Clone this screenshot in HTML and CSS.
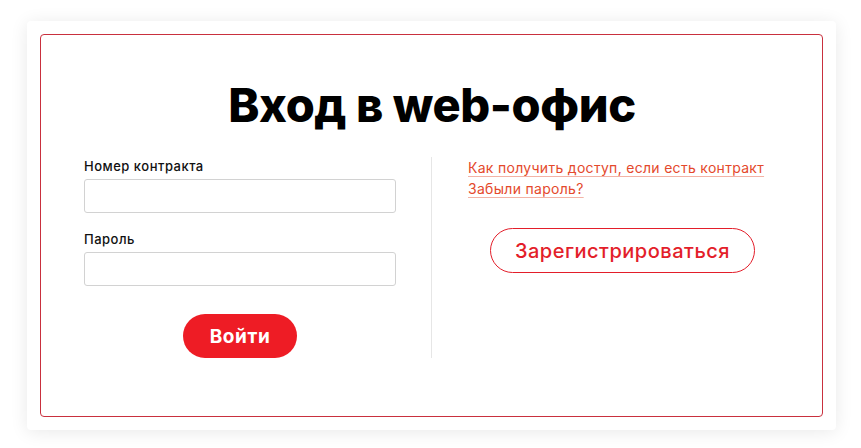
FILE: index.html
```html
<!DOCTYPE html>
<html>
<head>
    <meta charset="utf-8">
    <title>Вход в web-офис</title>
    <link rel="stylesheet" href="styles.css">
</head>
<body>
    <div class="login-card">
        <div class="login-box">
            <h1 class="login-title">Вход в web-офис</h1>
            <div class="login-cols">
                <form class="login-form" action="#">
                    <div class="field">
                        <label class="field-label" for="contract">Номер контракта</label>
                        <input class="field-input" id="contract" type="text">
                    </div>
                    <div class="field">
                        <label class="field-label" for="password">Пароль</label>
                        <input class="field-input" id="password" type="password">
                    </div>
                    <div class="form-actions">
                        <button class="btn-login" type="button">Войти</button>
                    </div>
                </form>
                <div class="divider"></div>
                <div class="login-side">
                    <ul class="help-links">
                        <li><a href="#">Как получить доступ, если есть контракт</a></li>
                        <li><a href="#">Забыли пароль?</a></li>
                    </ul>
                    <div class="side-actions">
                        <a class="btn-register" href="#">Зарегистрироваться</a>
                    </div>
                </div>
            </div>
        </div>
    </div>
</body>
</html>
```

FILE: styles.css
```css
* {
    margin: 0;
    padding: 0;
    box-sizing: border-box;
}

body {
    background: #ffffff;
    font-family: Inter, "Noto Sans", "Liberation Sans", sans-serif;
    color: #111;
    padding: 21px 25px 18px 27px;
}

.login-card {
    width: 809px;
    height: 409px;
    padding: 13px;
    background: #fff;
    border-radius: 4px;
    box-shadow: 0 2px 18px rgba(0, 0, 0, 0.09);
}

.login-box {
    height: 100%;
    border: 1px solid #c9303e;
    border-radius: 4px;
    padding: 42px 42px 0 43px;
}

.login-title {
    font-size: 47px;
    line-height: 56px;
    font-weight: 800;
    text-align: center;
    color: #000;
    letter-spacing: -0.4px;
}

.login-cols {
    display: grid;
    grid-template-columns: 312px 1px 1fr;
    column-gap: 35px;
    margin-top: 24px;
}

.field {
    margin-bottom: 17px;
}

.field-label {
    display: block;
    font-size: 13px;
    font-weight: 500;
    line-height: 16px;
    padding-top: 1px;
    margin-bottom: 5px;
    color: #111;
    letter-spacing: 0.5px;
}

.field-input {
    display: block;
    width: 100%;
    height: 34px;
    border: 1px solid #d2d2d2;
    border-radius: 3px;
    background: #fff;
}

.form-actions {
    display: flex;
    justify-content: center;
    padding-top: 11px;
}

.btn-login {
    width: 114px;
    height: 44px;
    border: none;
    border-radius: 22px;
    background: #ee1c25;
    color: #fff;
    font-family: inherit;
    font-size: 19px;
    font-weight: 700;
    letter-spacing: 0.6px;
}

.divider {
    background: #e6e6e6;
}

.login-side {
    padding-left: 1px;
}

.help-links {
    list-style: none;
}

.help-links li {
    font-size: 14px;
    line-height: 21px;
    letter-spacing: 0.3px;
}

.help-links a {
    color: #e4492c;
    text-decoration: underline;
    text-decoration-color: #f3b3a6;
    text-underline-offset: 3px;
}

.side-actions {
    display: flex;
    justify-content: center;
    margin-top: 29px;
}

.btn-register {
    display: flex;
    align-items: center;
    justify-content: center;
    width: 265px;
    height: 45px;
    margin-left: -3px;
    border: 1px solid #e31e2a;
    border-radius: 23px;
    color: #e31e2a;
    font-size: 20px;
    font-weight: 500;
    letter-spacing: 0.5px;
    text-decoration: none;
}
```
